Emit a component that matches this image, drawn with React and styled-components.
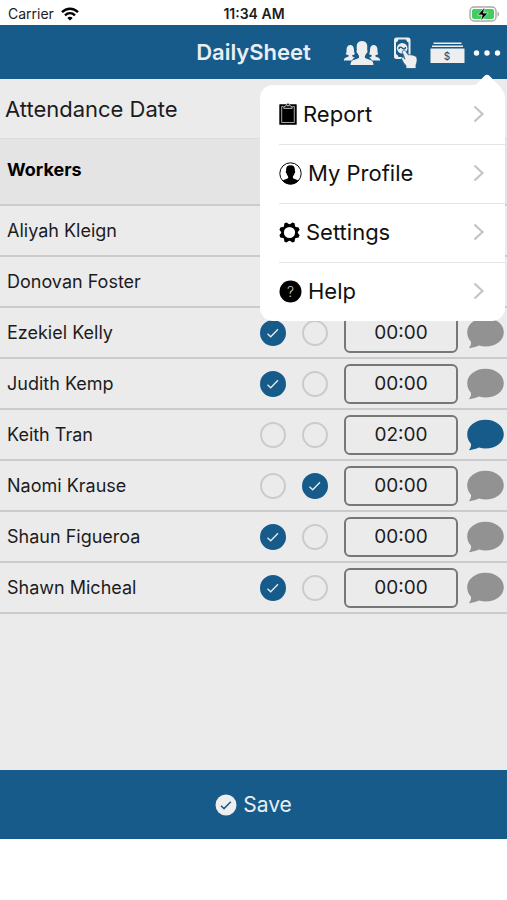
import styled, { createGlobalStyle, ThemeProvider } from "styled-components";

const theme = {
  blue: "#175b8a",
  background: "#ebebeb",
  headBackground: "#e4e4e4",
  line: "#cbcbcd",
  gray: "#929292",
  text: "#1c1c1e",
  light: "#e9eef4",
};

const workers = [
  { name: "Aliyah Kleign", present: true, absent: false, time: "00:00" },
  { name: "Donovan Foster", present: true, absent: false, time: "00:00" },
  { name: "Ezekiel Kelly", present: true, absent: false, time: "00:00" },
  { name: "Judith Kemp", present: true, absent: false, time: "00:00" },
  { name: "Keith Tran", present: false, absent: false, time: "02:00", note: true },
  { name: "Naomi Krause", present: false, absent: true, time: "00:00" },
  { name: "Shaun Figueroa", present: true, absent: false, time: "00:00" },
  { name: "Shawn Micheal", present: true, absent: false, time: "00:00" },
];

const WifiIcon = () => (
  <svg width="18" height="14" viewBox="0 0 18 14" fill="none" stroke="#000" strokeWidth="2.4">
    <path d="M1 5.2C5.6.6 12.4.6 17 5.2" />
    <path d="M4 8.3c2.9-2.8 7.1-2.8 10 0" />
    <path d="M9 13.6L6.3 10.9c1.5-1.4 3.9-1.4 5.4 0z" fill="#000" stroke="none" />
  </svg>
);

const BatteryIcon = () => (
  <svg width="31" height="16" viewBox="0 0 31 16">
    <rect x="1" y="1" width="26" height="14" rx="4" fill="#fff" stroke="#a9a9a9" strokeWidth="1.4" />
    <rect x="3" y="3" width="22" height="10" rx="2" fill="#3ecf5f" />
    <path d="M28.5 5.4c2 .8 2 4.4 0 5.2z" fill="#a9a9a9" />
    <path d="M15.6 1.2L8.6 9h4.6l-1.6 6L19.2 7h-4.7z" fill="#000" stroke="#d9f5df" strokeWidth=".8" />
  </svg>
);

const PeopleIcon = () => (
  <svg width="38" height="26" viewBox="0 0 38 26" fill="#eeeeee">
    <path d="M.8 20.500c.2-2.300 1.400-2.700 3.600-3.500 1.300-.5 1.500-1 1.200-1.800-1-.2-2.200-.5-2.800-1.200 1-1.600.6-3.400.8-5.200C3.900 6.300 5.300 5 7.300 5s3.300 1.300 3.600 3.800c.2 1.800 0 3.600 1 5.200-.6.7-1.700 1-2.700 1.200-.2.900.2 1.300 1.300 1.700l1.300.5c-1.600.9-2.300 1.700-2.700 3.100z" />
    <path d="M37.200 20.500c-.2-2.300-1.400-2.700-3.600-3.500-1.300-.5-1.500-1-1.200-1.800 1-.2 2.200-.5 2.800-1.200-1-1.600-.6-3.400-.8-5.200C34.100 6.300 32.700 5 30.700 5s-3.300 1.300-3.600 3.800c-.2 1.800 0 3.600-1 5.200.6.7 1.700 1 2.700 1.200.2.900-.2 1.300-1.300 1.700l-1.300.5c1.600.9 2.300 1.700 2.700 3.100z" />
    <path d="M7.500 25c.2-3.800 1.800-4.700 5.200-5.700 2.200-.7 3.500-1.200 3.500-2.300 0-1.400-1-1.800-1.400-3.500-.9-.1-1.200-1.200-1.300-2.200-.1-.8 0-1.200.4-1.300C13.100 4.800 14.200 1 19 1s5.900 3.800 5.100 9c.4.1.5.5.4 1.300-.1 1-.4 2.100-1.300 2.200-.4 1.700-1.400 2.100-1.400 3.500 0 1.100 1.300 1.600 3.500 2.300 3.400 1 5 1.900 5.200 5.700z" />
  </svg>
);

const PayIcon = () => (
  <svg width="25" height="34" viewBox="0 0 25 34">
    <rect x="2" y="2.500" width="14.500" height="19.500" rx="1.500" fill="#175b8a" stroke="#eeeeee" strokeWidth="2" />
    <path d="M2 6.500c2 0 3.500-1.500 3.500-4H2zM16.500 6.500c-2 0-3.500-1.500-3.500-4h3.500zM2 18c2 0 3.500 1.500 3.500 4H2z" fill="#eeeeee" />
    <circle cx="9.200" cy="12.200" r="5.300" fill="#eeeeee" />
    <path d="M6 13.200c-.4-2.200 1.800-2.600 3.200-1.200s3.400 1.200 3.200-1" fill="none" stroke="#175b8a" strokeWidth="1.400" />
    <path
      d="M9.800 14.600c1-.9 2.100-.5 2.800.5l2.600 3.700c3-.4 6 .3 8.200 1.900 1 1.200 1 5.400-.4 8.400V32.500H13v-3c-2-1.600-3.300-4-4.400-6.500-.5-1.500 1-2.200 2-1.200l1.400 1.400-2.400-6.300c-.4-1-.4-1.800.2-2.300z"
      fill="#eeeeee"
      stroke="#175b8a"
      strokeWidth=".8"
    />
  </svg>
);

const CashIcon = () => (
  <svg width="35" height="22" viewBox="0 0 35 22">
    <path d="M3.500 1.200h28M2 4.200h31" stroke="#eeeeee" strokeWidth="1.600" />
    <rect x=".5" y="6.500" width="34" height="14.500" fill="#eeeeee" />
    <text x="17" y="17.500" textAnchor="middle" fontFamily="Inter, sans-serif" fontSize="10" fontWeight="500" fill="#175b8a">
      $
    </text>
  </svg>
);

const MoreIcon = () => (
  <svg width="28" height="8" viewBox="0 0 28 8" fill="#fff">
    <circle cx="3.500" cy="4" r="2.700" />
    <circle cx="14" cy="4" r="2.700" />
    <circle cx="24.500" cy="4" r="2.700" />
  </svg>
);

const ReportIcon = () => (
  <svg width="18" height="22" viewBox="0 0 18 22">
    <rect x=".3" y="1.300" width="17.400" height="20.500" rx=".6" fill="#000" />
    <path d="M4.600 3.500H2.700v16h12.600v-16h-1.900" fill="none" stroke="#bbb" strokeWidth=".9" />
    <path d="M4.700 5.300c0-2 1.400-2.100 2.500-2.500C7.500.9 8.100.3 9 .3s1.500.6 1.800 2.500c1.100.4 2.500.5 2.500 2.500z" fill="#000" stroke="#ddd" strokeWidth=".9" />
    <circle cx="9" cy="2.600" r=".8" fill="#fff" />
  </svg>
);

const ProfileIcon = () => (
  <svg width="23" height="23" viewBox="0 0 23 23">
    <circle cx="11.500" cy="11.500" r="10.700" fill="#fff" stroke="#000" strokeWidth="1" />
    <path d="M3.700 18.900c1-1.500 3.300-1.700 4.700-2.400 1.100-.5.900-1.500.4-2.500-.7-.8-1.200-1.700-1.300-2.700-.8-.4-.9-2.200-.3-2.500-.5-3.600 1-5.500 4.300-5.500s4.800 1.900 4.300 5.500c.6.3.5 2.100-.3 2.500-.1 1-.6 1.900-1.300 2.700-.5 1-.7 2 .4 2.500 1.400.7 3.700.9 4.700 2.400-4.200 4.600-11.400 4.600-15.600 0z" />
  </svg>
);

const SettingsIcon = () => (
  <svg width="21" height="21" viewBox="0 0 21 21">
    <circle cx="10.500" cy="10.500" r="6.900" fill="none" stroke="#000" strokeWidth="2.600" />
    {[0, 45, 90, 135, 180, 225, 270, 315].map((angle) => (
      <path key={angle} d="M7.300 3.400L9.300.1h2.400l2 3.300z" transform={`rotate(${angle + 22.5} 10.5 10.5)`} />
    ))}
  </svg>
);

const HelpIcon = () => (
  <svg width="23" height="23" viewBox="0 0 23 23">
    <circle cx="11.500" cy="11.500" r="11" />
    <text x="11.500" y="16.500" textAnchor="middle" fontFamily="Inter, sans-serif" fontSize="14" fontWeight="300" fill="#ccc">
      ?
    </text>
  </svg>
);

const ChevronIcon = () => (
  <svg width="12" height="18" viewBox="0 0 12 18" fill="none" stroke="#c4c4c6" strokeWidth="2.200">
    <path d="M1.500 1.500L9.500 9l-8 7.500" />
  </svg>
);

const TickIcon = () => (
  <svg width="26" height="26" viewBox="0 0 26 26" fill="none" stroke="#e6edf3" strokeWidth="1.300">
    <path d="M7.500 13.800l3.200 3 7.300-7.500" />
  </svg>
);

const BubbleIcon = () => (
  <svg width="37" height="32" viewBox="0 0 37 32" fill="currentColor">
    <path d="M18.500.8C28.700.8 36.800 7 36.800 15.200S28.700 29.500 18.500 29.500c-2.200 0-4.400-.3-6.400-.9-2.300 1.200-5.600 2-9.300 2.600-.8.100-.7-.4-.3-.9 1.300-1.700 1.700-3.600 1.500-5.600C1.600 22.200.2 18.800.2 15.200.2 7 8.300.8 18.500.8z" />
  </svg>
);

const SavedIcon = () => (
  <svg width="22" height="22" viewBox="0 0 22 22">
    <circle cx="11" cy="11" r="10.500" fill="#eeeeee" />
    <path d="M6 11.800l3 2.800 6.800-6.800" fill="none" stroke="#175b8a" strokeWidth="1.500" />
  </svg>
);

const menuItems = [
  { label: "Report", Icon: ReportIcon },
  { label: "My Profile", Icon: ProfileIcon },
  { label: "Settings", Icon: SettingsIcon },
  { label: "Help", Icon: HelpIcon },
];

const App = () => {
  return (
    <ThemeProvider theme={theme}>
      <GlobalStyle />
      <Screen>
        <StatusBar>
          <Carrier>
            Carrier <WifiIcon />
          </Carrier>
          <Clock>11:34 AM</Clock>
          <Battery>
            <BatteryIcon />
          </Battery>
        </StatusBar>
        <Header>
          <Title>DailySheet</Title>
          <Actions>
            <IconButton aria-label="Workers">
              <PeopleIcon />
            </IconButton>
            <IconButton aria-label="Pay">
              <PayIcon />
            </IconButton>
            <IconButton aria-label="Cash">
              <CashIcon />
            </IconButton>
            <IconButton aria-label="More">
              <MoreIcon />
            </IconButton>
          </Actions>
          <Menu>
            {menuItems.map(({ label, Icon }) => (
              <MenuItem key={label}>
                <Icon />
                <span>{label}</span>
                <ChevronIcon />
              </MenuItem>
            ))}
          </Menu>
        </Header>
        <Main>
          <DateRow>Attendance Date</DateRow>
          <Table>
            <thead>
              <tr>
                <HeadCell>Workers</HeadCell>
                <HeadCell $width={42} aria-label="Present" />
                <HeadCell $width={42} aria-label="Absent" />
                <HeadCell $width={130} aria-label="Time" />
                <HeadCell $width={41} aria-label="Note" />
              </tr>
            </thead>
            <tbody>
              {workers.map((worker) => (
                <tr key={worker.name}>
                  <NameCell>{worker.name}</NameCell>
                  <Cell>
                    <Check>
                      <input type="checkbox" aria-label={`${worker.name} present`} defaultChecked={worker.present} />
                      <TickIcon />
                    </Check>
                  </Cell>
                  <Cell>
                    <Check>
                      <input type="checkbox" aria-label={`${worker.name} absent`} defaultChecked={worker.absent} />
                      <TickIcon />
                    </Check>
                  </Cell>
                  <Cell>
                    <TimeInput aria-label={`${worker.name} time`} defaultValue={worker.time} />
                  </Cell>
                  <Cell>
                    <NoteButton aria-label={`${worker.name} note`} $active={worker.note}>
                      <BubbleIcon />
                    </NoteButton>
                  </Cell>
                </tr>
              ))}
            </tbody>
          </Table>
        </Main>
        <SaveButton>
          <SavedIcon />
          Save
        </SaveButton>
      </Screen>
    </ThemeProvider>
  );
};

const GlobalStyle = createGlobalStyle`
  * {
    box-sizing: border-box;
  }

  body {
    margin: 0;
    background: #fff;
    color: ${({ theme }) => theme.text};
    font-family: Inter, "Liberation Sans", sans-serif;
  }

  button,
  input {
    margin: 0;
    padding: 0;
    font-family: inherit;
  }

  button {
    border: none;
    background: none;
    cursor: pointer;
  }

  svg {
    display: block;
    flex: none;
  }
`;

const Screen = styled.div`
  display: flex;
  flex-direction: column;
  min-height: 100vh;
  padding-bottom: 61px;
`;

const StatusBar = styled.div`
  display: grid;
  grid-template-columns: 1fr auto 1fr;
  align-items: center;
  height: 25px;
  padding: 2px 7px 0 8px;
  font-size: 14px;
`;

const Carrier = styled.div`
  display: flex;
  align-items: center;
  gap: 7px;
`;

const Clock = styled.div`
  font-weight: 600;
`;

const Battery = styled.div`
  justify-self: end;
`;

const Header = styled.header`
  position: relative;
  display: grid;
  grid-template-columns: 1fr auto 1fr;
  align-items: center;
  height: 54px;
  background: ${({ theme }) => theme.blue};
`;

const Title = styled.h1`
  grid-column: 2;
  margin: 0;
  color: ${({ theme }) => theme.light};
  font-size: 22px;
  font-weight: 600;
`;

const Actions = styled.div`
  display: flex;
  align-items: center;
  justify-content: flex-end;
  gap: 12px;
  padding: 2px 6px 0 0;

  button:last-child {
    margin-left: -4px;
  }
`;

const IconButton = styled.button`
  display: flex;
`;

const Menu = styled.nav`
  position: absolute;
  z-index: 2;
  top: 60px;
  right: 2px;
  width: 245px;
  border-radius: 13px;
  background: #fff;

  &::before {
    content: "";
    position: absolute;
    top: -7px;
    right: 7px;
    width: 22px;
    height: 22px;
    border-radius: 4px;
    background: #fff;
    transform: rotate(45deg);
  }
`;

const MenuItem = styled.button`
  position: relative;
  display: flex;
  align-items: center;
  gap: 6px;
  width: calc(100% - 19px);
  height: 59px;
  margin-left: 19px;
  padding: 0 20px 2px 0;
  color: #111;
  font-size: 22px;
  text-align: left;

  & + & {
    border-top: 1px solid #e4e4e6;
  }

  span {
    flex: 1;
  }
`;

const Main = styled.main`
  flex: 1;
  background: ${({ theme }) => theme.background};
`;

const DateRow = styled.div`
  display: flex;
  align-items: center;
  height: 59px;
  padding-left: 5px;
  font-size: 22px;
`;

const Table = styled.table`
  width: 100%;
  table-layout: fixed;
  border-collapse: separate;
  border-spacing: 0;
`;

const HeadCell = styled.th`
  width: ${({ $width }) => ($width ? `${$width}px` : "auto")};
  height: 68px;
  padding: 0 0 4px 7px;
  border-top: 1px solid #dadada;
  border-bottom: 2px solid ${({ theme }) => theme.line};
  background: ${({ theme }) => theme.headBackground};
  color: #000;
  font-size: 18px;
  font-weight: 700;
  text-align: left;
`;

const Cell = styled.td`
  height: 51px;
  padding: 0;
  border-bottom: 2px solid ${({ theme }) => theme.line};
`;

const NameCell = styled(Cell)`
  padding-left: 7px;
  font-size: 18px;
`;

const Check = styled.label`
  display: grid;
  width: 26px;
  height: 26px;
  margin: 0 auto;

  input,
  svg {
    grid-area: 1 / 1;
  }

  input {
    width: 26px;
    height: 26px;
    border: 2px solid ${({ theme }) => theme.line};
    border-radius: 50%;
    appearance: none;
    cursor: pointer;
  }

  input:checked {
    border-color: ${({ theme }) => theme.blue};
    background: ${({ theme }) => theme.blue};
  }

  svg {
    visibility: hidden;
    pointer-events: none;
  }

  input:checked + svg {
    visibility: visible;
  }
`;

const TimeInput = styled.input`
  display: block;
  width: 114px;
  height: 40px;
  margin: 0 auto;
  border: 2px solid #777;
  border-radius: 6px;
  background: transparent;
  color: ${({ theme }) => theme.text};
  font-size: 19px;
  text-align: center;
`;

const NoteButton = styled.button`
  display: block;
  margin-left: 1px;
  color: ${({ theme, $active }) => ($active ? theme.blue : theme.gray)};
`;

const SaveButton = styled.button`
  display: flex;
  align-items: center;
  justify-content: center;
  gap: 6px;
  height: 69px;
  background: ${({ theme }) => theme.blue};
  color: ${({ theme }) => theme.light};
  font-size: 21px;
`;

export default App;
